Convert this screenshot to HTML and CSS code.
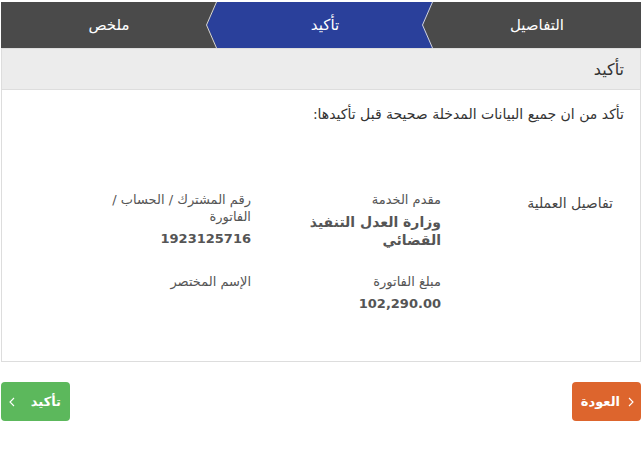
FILE: index.html
```html
<!DOCTYPE html>
<html lang="ar" dir="rtl">
<head>
<meta charset="utf-8">
<title>تأكيد</title>
<link rel="stylesheet" href="styles.css">
</head>
<body>
<div class="page">
  <div class="steps">
    <div class="step step-1"><span class="step-label">التفاصيل</span></div>
    <div class="step step-2 active">
      <svg class="sep" width="11" height="46" viewBox="0 0 11 46"><polyline points="10.5,0 0.5,23 10.5,46" fill="none" stroke="#d6d6d6" stroke-width="1"/></svg>
      <span class="step-label">تأكيد</span>
    </div>
    <div class="step step-3">
      <svg class="sep" width="11" height="46" viewBox="0 0 11 46"><polyline points="10.5,0 0.5,23 10.5,46" fill="none" stroke="#d6d6d6" stroke-width="1"/></svg>
      <span class="step-label">ملخص</span>
    </div>
  </div>

  <div class="panel">
    <div class="panel-head">تأكيد</div>
    <div class="panel-body">
      <p class="intro">تأكد من ان جميع البيانات المدخلة صحيحة قبل تأكيدها:</p>
      <div class="details">
        <div class="section-title">تفاصيل العملية</div>
        <div class="fields">
          <div class="field col-a">
            <div class="label">مقدم الخدمة</div>
            <div class="value">وزارة العدل التنفيذ القضائي</div>
          </div>
          <div class="field col-b">
            <div class="label">رقم المشترك / الحساب / الفاتورة</div>
            <div class="value num">1923125716</div>
          </div>
          <div class="field col-a">
            <div class="label">مبلغ الفاتورة</div>
            <div class="value num">102,290.00</div>
          </div>
          <div class="field col-b">
            <div class="label">الإسم المختصر</div>
            <div class="value"></div>
          </div>
        </div>
      </div>
    </div>
  </div>

  <div class="actions">
    <button class="btn btn-back" type="button">
      <svg class="chev" width="6" height="10" viewBox="0 0 6 10"><polyline points="1,1 5,5 1,9" fill="none" stroke="#fff" stroke-width="1.1"/></svg>
      <span>العودة</span>
    </button>
    <button class="btn btn-confirm" type="button">
      <span>تأكيد</span>
      <svg class="chev" width="6" height="10" viewBox="0 0 6 10"><polyline points="5,1 1,5 5,9" fill="none" stroke="#fff" stroke-width="1.1"/></svg>
    </button>
  </div>
</div>
</body>
</html>
```

FILE: styles.css
```css
* { box-sizing: border-box; }

html, body {
  margin: 0;
  padding: 0;
  background: #fff;
}

body {
  font-family: "DejaVu Sans", sans-serif;
  color: #333;
}

.page {
  width: 640px;
  margin: 2px 3px 0 auto;
}

/* Wizard steps */
.steps {
  display: flex;
  height: 46px;
  background: #4a4a4a;
}

.step {
  position: relative;
  display: flex;
  align-items: center;
  justify-content: center;
  color: #fff;
  font-size: 15px;
}

.step-1 { width: 208px; }
.step-2 { width: 216px; }
.step-3 { width: 216px; }

.step-label {
  position: relative;
  z-index: 2;
}

.step.active::before {
  content: "";
  position: absolute;
  top: 0;
  bottom: 0;
  right: 0;
  left: -10px;
  background: #2a409b;
  clip-path: polygon(10px 0, 100% 0, calc(100% - 10px) 50%, 100% 100%, 10px 100%, 0 50%);
  z-index: 0;
}

.sep {
  position: absolute;
  top: 0;
  right: 0;
  z-index: 3;
  display: block;
}

/* Panel */
.panel {
  border: 1px solid #dddddd;
}

.panel-head {
  height: 41px;
  background: #ececec;
  border-bottom: 1px solid #dddddd;
  display: flex;
  align-items: center;
  padding-right: 16px;
  font-size: 16px;
  color: #333;
}

.panel-body {
  padding: 14px 16px 48px 16px;
}

.intro {
  margin: 0;
  font-size: 14px;
  line-height: 20px;
  color: #333;
}

.details {
  display: flex;
  margin-top: 67px;
}

.section-title {
  width: 183px;
  padding-right: 11px;
  padding-top: 3px;
  font-size: 14px;
  line-height: 18px;
  color: #444;
}

.fields {
  display: grid;
  grid-template-columns: 190px 190px;
  row-gap: 24px;
}

.field.col-a { padding-left: 25px; }
.field.col-b { padding-left: 40px; }

.label {
  font-size: 13px;
  line-height: 17px;
  color: #555;
}

.value {
  margin-top: 5px;
  font-size: 14px;
  line-height: 18px;
  font-weight: bold;
  color: #555;
}

.value.num {
  font-size: 13px;
}

/* Actions */
.actions {
  display: flex;
  justify-content: space-between;
  margin-top: 20px;
}

.btn {
  display: inline-flex;
  align-items: center;
  height: 39px;
  width: 69px;
  border: none;
  border-radius: 4px;
  color: #fff;
  font-family: "DejaVu Sans", sans-serif;
  font-size: 13px;
  font-weight: bold;
  cursor: pointer;
}

.btn-back {
  background: #dd652d;
  padding: 0 7px 0 0;
  gap: 8px;
}

.btn-confirm {
  background: #5cb85c;
  padding: 0 9px 0 0;
  gap: 16px;
}

.chev { display: block; }
```
